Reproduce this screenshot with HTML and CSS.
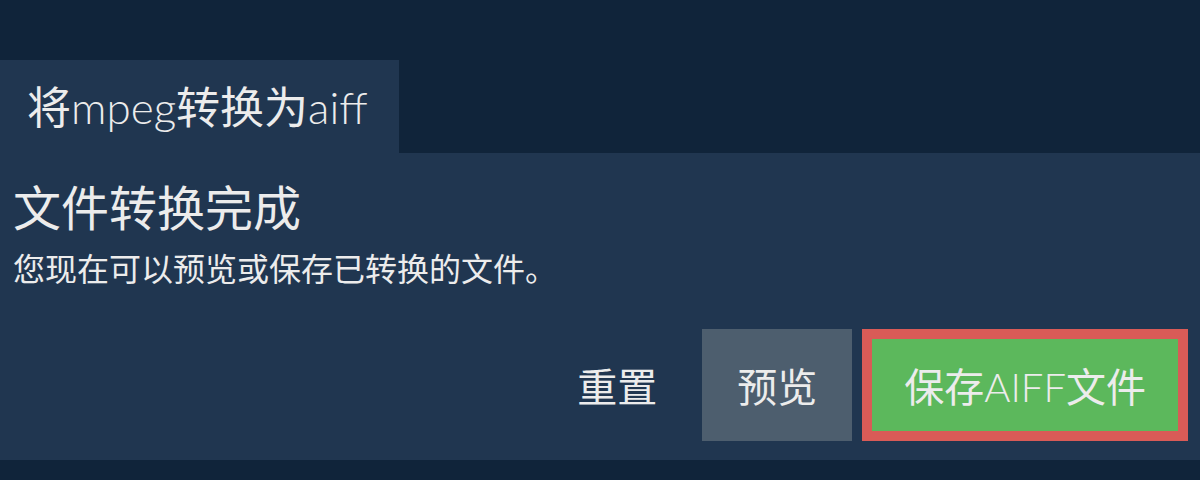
FILE: index.html
```html
<!DOCTYPE html>
<html>
<head>
    <title>将mpeg转换为aiff</title>
    <link rel="stylesheet" href="styles.css">
</head>
<body>
    <div class="tab">
        <h1>将<span class="latin">mpeg</span>转换为<span class="latin">aiff</span></h1>
    </div>

    <div class="panel">
        <h2>文件转换完成</h2>
        <p>您现在可以预览或保存已转换的文件。</p>

        <!-- action buttons, right aligned -->
        <div class="actions">
            <button class="btn btn-reset">重置</button>
            <button class="btn btn-preview">预览</button>
            <button class="btn btn-save">保存<span class="latin">AIFF</span>文件</button>
        </div>
    </div>
</body>
</html>
```

FILE: styles.css
```css
/* page base */
body {
    margin: 0;
    padding-top: 60px;
    height: 480px;
    overflow: hidden;
    box-sizing: border-box;
    background-color: #10243a;
    color: #ececec;
    font-family: Lato, "Noto Sans CJK SC", sans-serif;
}

/* latin words use the thin cut */
.latin {
    font-weight: 300;
}

.tab {
    display: flex;
    align-items: center;
    width: 399px;
    height: 93px;
    padding-left: 27px;
    box-sizing: border-box;
    background-color: #203650;
}

.tab h1 {
    margin: 0;
    font-size: 44px;
    font-weight: normal;
    line-height: 1;
}

.panel {
    height: 307px;
    padding: 26px 12px 19px 13px;
    box-sizing: border-box;
    background-color: #203650;
}

.panel h2 {
    margin: 0;
    font-size: 48px;
    font-weight: normal;
    line-height: 58px;
}

.panel p {
    margin: 10px 0 0 0;
    font-size: 32px;
    line-height: 44px;
}

.actions {
    display: flex;
    justify-content: flex-end;
    gap: 10px;
    margin-top: 38px;
}

.btn {
    height: 112px;
    padding: 0 35px;
    border: none;
    font-family: inherit;
    font-size: 40px;
    color: #ececec;
    background: none;
    cursor: pointer;
}

.btn-preview {
    background-color: #4d5e6e;
}

.btn-save {
    padding: 0 32px;
    border: 10px solid #d95b57;
    background-color: #5cb85c;
}
```
